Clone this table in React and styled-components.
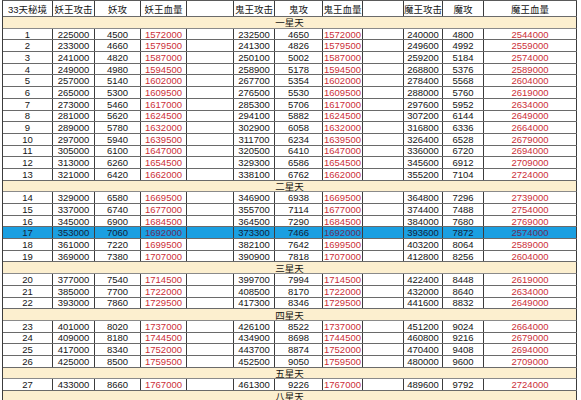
import React from "react";
import styled, { createGlobalStyle } from "styled-components";

const GlobalStyle = createGlobalStyle`
  html, body {
    margin: 0;
    padding: 0;
    background: #ffffff;
  }
  body {
    font-family: "Liberation Sans", "Noto Sans CJK SC", sans-serif;
  }
`;

const COLUMNS = "50px 42px 46px 46px 47px 41px 48px 40px 41px 39px 41px 93px";

const headers = [
  "33天秘境", "妖王攻击", "妖攻", "妖王血量", "",
  "鬼王攻击", "鬼攻", "鬼王血量", "",
  "魔王攻击", "魔攻", "魔王血量",
];

const sections = {
  1: "一星天",
  14: "二星天",
  20: "三星天",
  23: "四星天",
  27: "五星天",
};

const demonHp = (n) =>
  n <= 16 ? 2544000 + 15000 * (n - 1) : 2574000 + 15000 * (n - 17);

const makeLevel = (n) => ({
  n,
  values: [
    n,
    225000 + 8000 * (n - 1),
    4500 + 160 * (n - 1),
    1572000 + 7500 * (n - 1),
    "",
    232500 + 8800 * (n - 1),
    4650 + 176 * (n - 1),
    1572000 + 7500 * (n - 1),
    "",
    240000 + 9600 * (n - 1),
    4800 + 192 * (n - 1),
    demonHp(n),
  ],
});

const redCols = [3, 7, 11];

const rows = [];
for (let n = 1; n <= 27; n++) {
  if (sections[n]) rows.push({ section: sections[n] });
  rows.push(makeLevel(n));
}
rows.push({ section: "八星天" });

const Sheet = styled.div`
  width: 574px;
  margin-left: 2px;
  border-left: 1px solid #3c3c3c;
  border-top: 1px solid #5a5a5a;
  font-size: 9.5px;
  color: #151515;
`;

const Row = styled.div`
  display: grid;
  grid-template-columns: ${COLUMNS};
  height: ${(p) => p.$h}px;
  box-sizing: border-box;
  border-bottom: 1px solid #6a6a6a;
  background: ${(p) => (p.$active ? "#1a9fe1" : "#ffffff")};
  color: ${(p) => (p.$active ? "#14233a" : "#151515")};
`;

const Cell = styled.div`
  display: flex;
  align-items: center;
  justify-content: center;
  border-right: 1px solid #3c3c3c;
  white-space: nowrap;
  overflow: hidden;
  color: ${(p) => (p.$red ? (p.$active ? "#6a2d5c" : "#cc2f38") : "inherit")};
`;

const SectionRow = styled.div`
  display: flex;
  align-items: center;
  justify-content: center;
  height: 11.7px;
  box-sizing: border-box;
  border-bottom: 1px solid #8a8a8a;
  border-right: 1px solid #3c3c3c;
  background: #fcefcf;
  color: #151515;
  white-space: nowrap;
  overflow: hidden;
`;

export default function App() {
  return (
    <>
      <GlobalStyle />
      <Sheet>
        <Row $h={16}>
          {headers.map((h, i) => (
            <Cell key={i}>{h}</Cell>
          ))}
        </Row>
        {rows.map((r, i) =>
          r.section ? (
            <SectionRow key={i}>{r.section}</SectionRow>
          ) : (
            <Row key={i} $h={11.7} $active={r.n === 17}>
              {r.values.map((v, j) => (
                <Cell key={j} $red={redCols.includes(j)} $active={r.n === 17}>
                  {v}
                </Cell>
              ))}
            </Row>
          )
        )}
      </Sheet>
    </>
  );
}
